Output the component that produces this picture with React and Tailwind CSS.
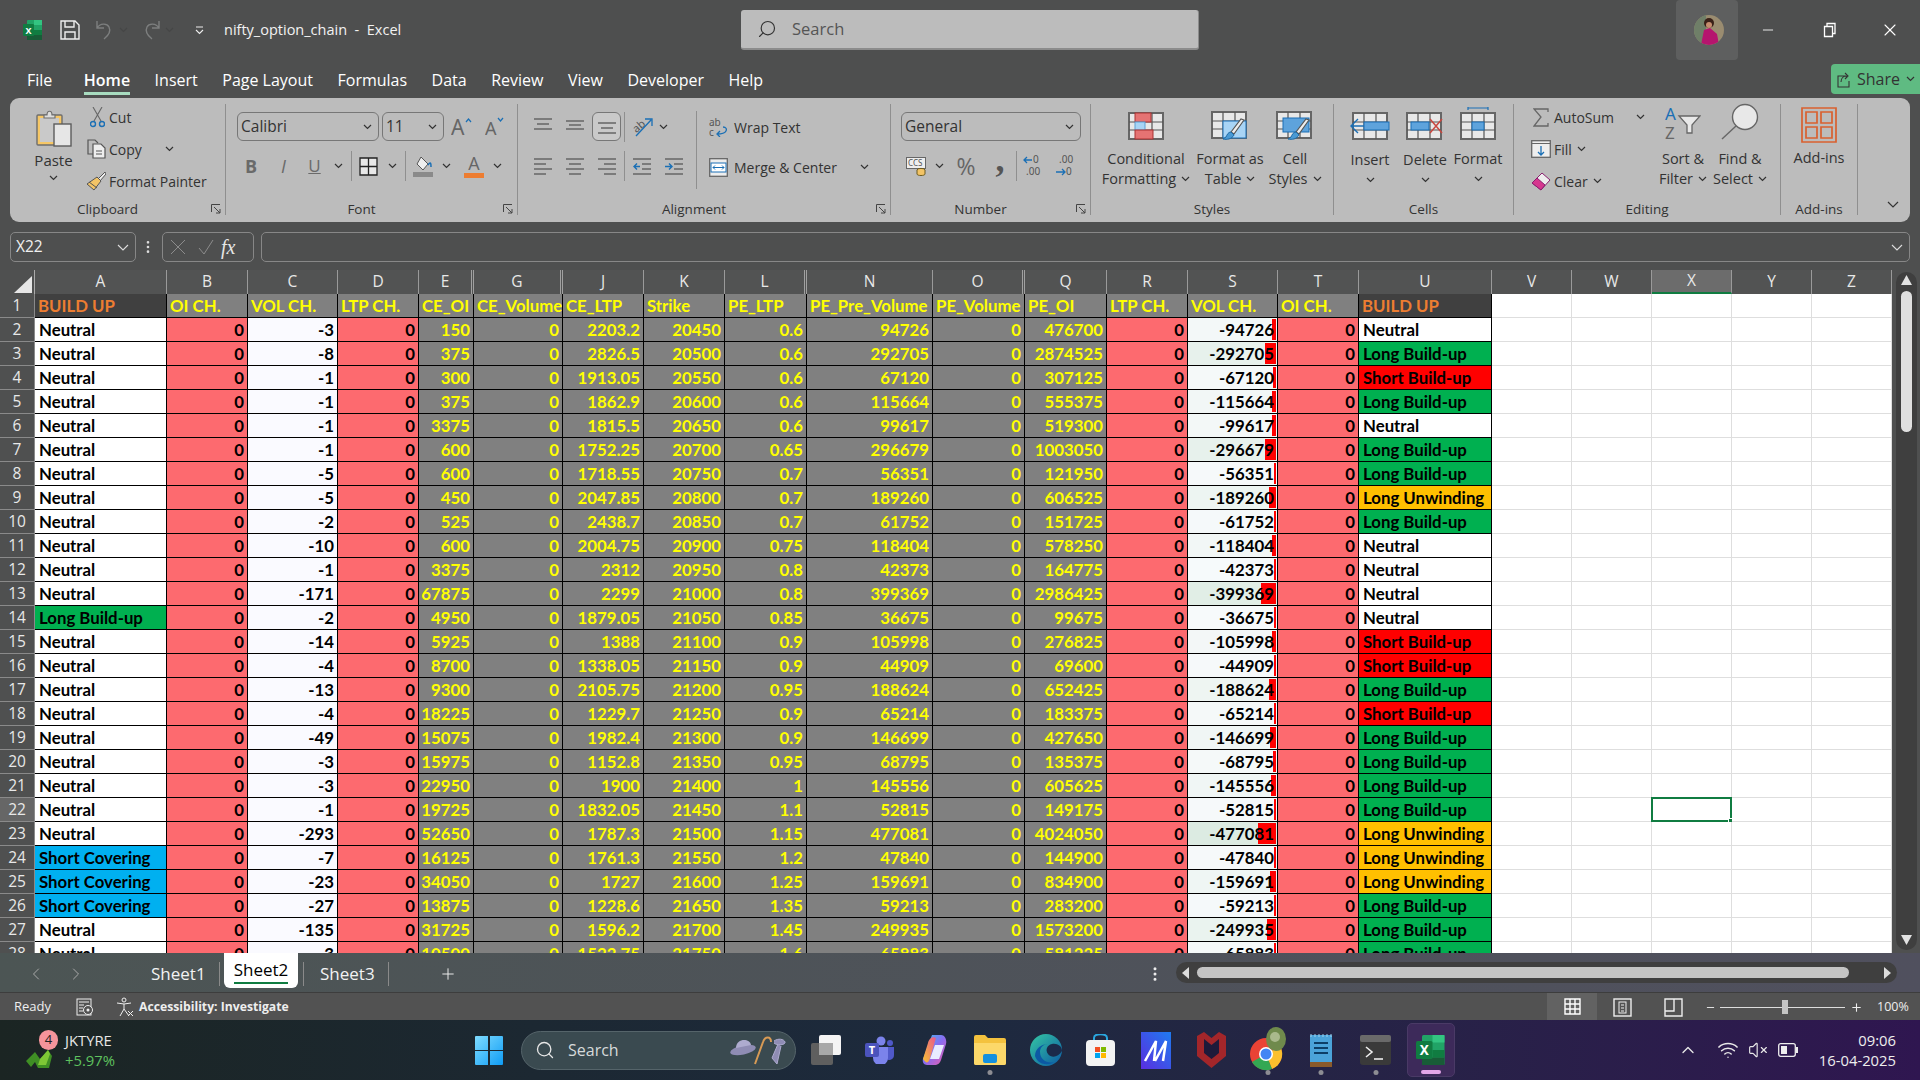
import { Search, ChevronUp, Wifi, VolumeX, Plus, ChevronLeft, ChevronRight, EllipsisVertical, X, Minus } from "lucide-react";

const rows = [
  ["Neutral", -3, 150, 2203.2, 20450, 0.6, 94726, 476700, "Neutral"],
  ["Neutral", -8, 375, 2826.5, 20500, 0.6, 292705, 2874525, "Long Build-up"],
  ["Neutral", -1, 300, 1913.05, 20550, 0.6, 67120, 307125, "Short Build-up"],
  ["Neutral", -1, 375, 1862.9, 20600, 0.6, 115664, 555375, "Long Build-up"],
  ["Neutral", -1, 3375, 1815.5, 20650, 0.6, 99617, 519300, "Neutral"],
  ["Neutral", -1, 600, 1752.25, 20700, 0.65, 296679, 1003050, "Long Build-up"],
  ["Neutral", -5, 600, 1718.55, 20750, 0.7, 56351, 121950, "Long Build-up"],
  ["Neutral", -5, 450, 2047.85, 20800, 0.7, 189260, 606525, "Long Unwinding"],
  ["Neutral", -2, 525, 2438.7, 20850, 0.7, 61752, 151725, "Long Build-up"],
  ["Neutral", -10, 600, 2004.75, 20900, 0.75, 118404, 578250, "Neutral"],
  ["Neutral", -1, 3375, 2312, 20950, 0.8, 42373, 164775, "Neutral"],
  ["Neutral", -171, 67875, 2299, 21000, 0.8, 399369, 2986425, "Neutral"],
  ["Long Build-up", -2, 4950, 1879.05, 21050, 0.85, 36675, 99675, "Neutral"],
  ["Neutral", -14, 5925, 1388, 21100, 0.9, 105998, 276825, "Short Build-up"],
  ["Neutral", -4, 8700, 1338.05, 21150, 0.9, 44909, 69600, "Short Build-up"],
  ["Neutral", -13, 9300, 2105.75, 21200, 0.95, 188624, 652425, "Long Build-up"],
  ["Neutral", -4, 18225, 1229.7, 21250, 0.9, 65214, 183375, "Short Build-up"],
  ["Neutral", -49, 15075, 1982.4, 21300, 0.9, 146699, 427650, "Long Build-up"],
  ["Neutral", -3, 15975, 1152.8, 21350, 0.95, 68795, 135375, "Long Build-up"],
  ["Neutral", -3, 22950, 1900, 21400, 1, 145556, 605625, "Long Build-up"],
  ["Neutral", -1, 19725, 1832.05, 21450, 1.1, 52815, 149175, "Long Build-up"],
  ["Neutral", -293, 52650, 1787.3, 21500, 1.15, 477081, 4024050, "Long Unwinding"],
  ["Short Covering", -7, 16125, 1761.3, 21550, 1.2, 47840, 144900, "Long Unwinding"],
  ["Short Covering", -23, 34050, 1727, 21600, 1.25, 159691, 834900, "Long Unwinding"],
  ["Short Covering", -27, 13875, 1228.6, 21650, 1.35, 59213, 283200, "Long Build-up"],
  ["Neutral", -135, 31725, 1596.2, 21700, 1.45, 249935, 1573200, "Long Build-up"],
  ["Neutral", -3, 10500, 1522.75, 21750, 1.6, 65883, 581225, "Long Build-up"],
];

const letters = ["A", "B", "C", "D", "E", "G", "J", "K", "L", "N", "O", "Q", "R", "S", "T", "U", "V", "W", "X", "Y", "Z"];
const hidden = ["E", "G", "L", "O"];
const headers = ["BUILD UP", "OI CH.", "VOL CH.", "LTP CH.", "CE_OI", "CE_Volume", "CE_LTP", "Strike", "PE_LTP", "PE_Pre_Volume", "PE_Volume", "PE_OI", "LTP CH.", "VOL CH.", "OI CH.", "BUILD UP"];

const statusBg = {
  Neutral: "bg-white",
  "Long Build-up": "bg-[#00b050]",
  "Short Build-up": "bg-[#ff0000]",
  "Long Unwinding": "bg-[#ffc000]",
  "Short Covering": "bg-[#00b0f0]",
};

const gridCols = "grid grid-cols-[35px_132px_81px_90px_81px_55px_89px_81px_81px_82px_126px_92px_82px_81px_90px_81px_133px_80px_80px_80px_80px_80px]";

function Chev({ className = "" }) {
  return (
    <svg width="9" height="6" viewBox="0 0 9 6" className={className}>
      <path d="M1 1l3.5 3.5L8 1" fill="none" stroke="#333" strokeWidth="1.2" />
    </svg>
  );
}

function Launcher() {
  return (
    <svg width="10" height="10" viewBox="0 0 10 10" className="justify-self-end mr-[4px]">
      <path d="M.5 8V.5H9M3 3l6 6M5 9h4V5" fill="none" stroke="#444" strokeWidth="1" />
    </svg>
  );
}

function Group({ className, label, launcher, children }) {
  return (
    <div className={`flex pt-[3px] shrink-0 ${className}`}>
      <div className="flex-1 min-w-0 flex flex-col h-[118px]">
        <div className="h-[98px] flex">{children}</div>
        {launcher ? (
          <div className="h-[20px] grid grid-cols-[1fr_auto_1fr_20px] items-center text-[13.5px] text-[#333]">
            <span />
            <span>{label}</span>
            <span />
            <Launcher />
          </div>
        ) : (
          <div className="h-[20px] flex justify-center items-center text-[13.5px] text-[#333]">{label}</div>
        )}
      </div>
      <div className="w-px h-[111px] mt-[3px] bg-[#8f8f8f]" />
    </div>
  );
}

function Slot({ className, children }) {
  return <div className={`flex items-center justify-center shrink-0 ${className}`}>{children}</div>;
}

function Combo({ className, children }) {
  return (
    <div className={`h-[29px] rounded-[6px] border border-[#777] flex items-center justify-between pl-[3px] pr-[6px] text-[15.5px] text-[#333] shrink-0 ${className}`}>
      <span>{children}</span>
      <Chev />
    </div>
  );
}

function SmallBtn({ icon, text, textClass, chevClass }) {
  return (
    <div className="h-[32px] flex items-center text-[14px] text-[#333]">
      <Slot className="w-[26px]">{icon}</Slot>
      <span className={`whitespace-nowrap ${textClass}`}>{text}</span>
      {chevClass !== undefined && <Chev className={chevClass} />}
    </div>
  );
}

function BigBtn({ className, icon, line1, line2, iconClass = "h-[39px] items-end" }) {
  return (
    <div className={`flex flex-col items-center shrink-0 text-[14.5px] leading-[20px] text-[#333] ${className}`}>
      <div className={`flex justify-center ${iconClass}`}>{icon}</div>
      <div className="mt-[9px] whitespace-nowrap">{line1}</div>
      {line2 ? (
        <div className="whitespace-nowrap flex items-center gap-[5px]">
          {line2}
          <Chev />
        </div>
      ) : (
        <Chev className="mt-[7px]" />
      )}
    </div>
  );
}

function SheetGrid({ fill = "#e8e8e8" }) {
  return (
    <>
      <rect x="1" y="1" width="34" height="26" fill={fill} stroke="#666" strokeWidth="2" />
      <path d="M12 1v26M24 1v26M1 10h34M1 18h34" stroke="#555" strokeWidth="1.2" />
    </>
  );
}

function Brush() {
  return (
    <g>
      <path d="M33 9L23 23l-3-2L30 8z" fill="#eee" stroke="#555" strokeWidth="1.2" />
      <path d="M20 21c-3 0-4 3-5 5l-3 2c4 1 9 0 11-4z" fill="#4a9ad4" stroke="#1f6aa5" strokeWidth="1" />
    </g>
  );
}

function ExcelIcon({ size = 20 }) {
  return (
    <svg width={size} height={size} viewBox="0 0 20 20">
      <rect x="4" y="0" width="15" height="20" rx="1" fill="#21a366" />
      <rect x="11" y="0" width="8" height="5" fill="#33c481" />
      <rect x="11" y="10" width="8" height="5" fill="#107c41" />
      <rect x="4" y="15" width="15" height="5" fill="#185c37" />
      <rect x="0" y="4" width="11" height="12" rx="1" fill="#107c41" />
      <text x="5.5" y="13.5" textAnchor="middle" fontSize="9" fontWeight="700" fill="#fff" fontFamily="Noto Sans, sans-serif">X</text>
    </svg>
  );
}

function TitleBar() {
  return (
    <div className="h-[60px] flex items-center shrink-0 relative">
      <div className="ml-[23px]"><ExcelIcon /></div>
      <svg width="20" height="20" viewBox="0 0 20 20" className="ml-[17px]">
        <path d="M1 1h14l4 4v14H1zM5 1v6h9V1M5 19v-7h10v7" fill="none" stroke="#eee" strokeWidth="1.4" />
      </svg>
      <svg width="18" height="20" viewBox="0 0 18 20" className="ml-[16px]">
        <path d="M1 1v7h7M1 8c3-5 10-5 12-1 2 4 0 8-5 12" fill="none" stroke="#7d7f7f" strokeWidth="1.4" />
      </svg>
      <Chev className="ml-[5px] opacity-30" />
      <svg width="18" height="20" viewBox="0 0 18 20" className="ml-[14px]">
        <path d="M17 1v7h-7M17 8c-3-5-10-5-12-1-2 4 0 8 5 12" fill="none" stroke="#7d7f7f" strokeWidth="1.4" />
      </svg>
      <Chev className="ml-[5px] opacity-30" />
      <svg width="9" height="9" viewBox="0 0 9 9" className="ml-[21px]">
        <path d="M1 1h7M1 4l3.5 3.5L8 4" fill="none" stroke="#eee" strokeWidth="1.1" />
      </svg>
      <span className="ml-[20px] text-[14.5px] text-[#f2f2f2] whitespace-pre">nifty_option_chain  -  Excel</span>
      <div className="absolute left-[741px] top-[10px] w-[458px] h-[40px] rounded-[3px] bg-[#bcbcbc] border-b-2 border-r border-[#8c8c8c] flex items-center">
        <Search size={20} strokeWidth={1.4} className="ml-[16px] -scale-x-100 text-[#333]" />
        <span className="ml-[15px] text-[16.5px] text-[#555]">Search</span>
      </div>
      <div className="ml-auto w-[62px] h-[60px] bg-[#5e5f5f] rounded-[4px] flex items-center justify-center pl-[4px]">
        <svg width="30" height="30" viewBox="0 0 30 30">
          <clipPath id="av"><ellipse cx="15" cy="15" rx="15" ry="15" /></clipPath>
          <g clipPath="url(#av)">
            <rect width="30" height="30" fill="#9a8c70" />
            <rect x="0" y="0" width="12" height="30" fill="#6f7f68" />
            <circle cx="15" cy="8" r="5" fill="#3a2018" />
            <circle cx="15" cy="10" r="3" fill="#c48d6e" />
            <path d="M7 30l3-15 6-2 7 6 2 11z" fill="#b5156e" />
          </g>
        </svg>
      </div>
      <Minus size={16} strokeWidth={1.3} className="ml-[22px] text-white" />
      <svg width="14" height="16" viewBox="0 0 14 16" className="ml-[47px]">
        <path d="M1.5 4.500h8v10h-8zM4 4.500V1.500h8v10H9.500" fill="none" stroke="#fff" strokeWidth="1.3" />
      </svg>
      <X size={20} strokeWidth={1.3} className="ml-[43px] mr-[20px] text-white" />
    </div>
  );
}

function MenuBar() {
  const items = ["File", "Home", "Insert", "Page Layout", "Formulas", "Data", "Review", "View", "Developer", "Help"];
  return (
    <div className="h-[38px] shrink-0 flex items-start pl-[27px] gap-[24.5px] text-[16px] text-white relative">
      {items.map((m) => (
        <div key={m} className={`relative h-[35px] pt-[8px] leading-[24px] whitespace-nowrap ${m === "Home" ? "font-semibold" : ""} ${m === "File" ? "mr-[7px]" : ""}`}>
          {m}
          {m === "Home" && <div className="absolute left-0 right-0 bottom-0 h-[3px] bg-[#a8dcc0]" />}
        </div>
      ))}
      <div className="ml-auto mt-[4px] w-[89px] h-[30px] rounded-l-[4px] bg-[#5fbb82] flex items-center pl-[6px] gap-[6px] text-[#333]">
        <svg width="14" height="17" viewBox="0 0 14 17">
          <path d="M9 5H1v11h11v-6M4 11c0-4 3-6 6-6M8 2l3 3-3 3" fill="none" stroke="#333" strokeWidth="1.1" />
        </svg>
        <span className="text-[16px]">Share</span>
        <Chev />
      </div>
    </div>
  );
}

function LinesIcon({ type }) {
  const d = {
    top: "M0 2h18M3 7h12M0 12h18",
    mid: "M0 4h18M3 8h12M0 12h18",
    bot: "M0 6h18M3 11h12M0 16h18",
    left: "M0 2h18M0 7h12M0 12h18M0 17h12",
    center: "M0 2h18M3 7h12M0 12h18M3 17h12",
    right: "M0 2h18M6 7h12M0 12h18M6 17h12",
  }[type];
  return (
    <svg width="18" height="19" viewBox="0 0 18 19">
      <path d={d} stroke="#666" strokeWidth="1.5" />
    </svg>
  );
}

function IndentIcon({ dir }) {
  return (
    <svg width="18" height="19" viewBox="0 0 18 19">
      {dir === "out" ? (
        <>
          <path d="M0 2h18M9 7h9M9 12h9M0 17h18" stroke="#666" strokeWidth="1.5" />
          <path d="M7 9.500H1M4 6.500l-3 3 3 3" fill="none" stroke="#1a6fb5" strokeWidth="1.4" />
        </>
      ) : (
        <>
          <path d="M0 2h18M9 7h9M9 12h9M0 17h18" stroke="#666" strokeWidth="1.5" />
          <path d="M0 9.500h6M4 6.500l3 3-3 3" fill="none" stroke="#1a6fb5" strokeWidth="1.4" />
        </>
      )}
    </svg>
  );
}

function DecimalIcon({ dir }) {
  return (
    <svg width="20" height="24" viewBox="0 0 20 24" fontFamily="Noto Sans, sans-serif" fontSize="10" fill="#555">
      {dir === "inc" ? (
        <>
          <text x="10" y="9">0</text>
          <text x="3" y="21">.00</text>
          <path d="M9 6H1M4 3L1 6l3 3" fill="none" stroke="#1a6fb5" strokeWidth="1.3" />
        </>
      ) : (
        <>
          <text x="4" y="9">.00</text>
          <text x="11" y="21">0</text>
          <path d="M1 18h9M7 15l3 3-3 3" fill="none" stroke="#1a6fb5" strokeWidth="1.3" />
        </>
      )}
    </svg>
  );
}

function Ribbon() {
  const sep = <div className="w-px h-[30px] bg-[#8f8f8f] mx-auto" />;
  return (
    <div className="mx-[10px] h-[124px] shrink-0 rounded-[9px] bg-[#bcbcbc] flex items-start">
      <Group className="w-[216px]" label="Clipboard" launcher>
        <div className="pl-[14px] flex">
          <div className="w-[59px] flex flex-col items-center text-[15px] text-[#333] pt-[8px]">
            <svg width="36" height="38" viewBox="0 0 36 38">
              <rect x="1" y="6" width="25" height="30" rx="1" fill="#f6c766" stroke="#6e6e6e" strokeWidth="1.4" />
              <rect x="4" y="9" width="19" height="24" fill="#c9c9c9" />
              <path d="M8 9V6h3c0-5 5-5 5 0h3v3z" fill="#ddd" stroke="#6e6e6e" strokeWidth="1.2" />
              <rect x="18" y="15" width="17" height="22" fill="#e6e6e6" stroke="#5c5c5c" strokeWidth="1.4" />
            </svg>
            <span className="mt-[3px] leading-[20px]">Paste</span>
            <Chev className="mt-[5px]" />
          </div>
          <div className="flex flex-col">
            <SmallBtn
              text="Cut"
              icon={
                <svg width="15" height="21" viewBox="0 0 15 21" className="ml-[2px]">
                  <path d="M3 0l8 14M12 0L4 14" stroke="#666" strokeWidth="1.1" />
                  <circle cx="3" cy="17" r="2.500" fill="none" stroke="#1a6fb5" strokeWidth="1.4" />
                  <circle cx="12" cy="17" r="2.500" fill="none" stroke="#1a6fb5" strokeWidth="1.4" />
                </svg>
              }
            />
            <SmallBtn
              text="Copy"
              textClass="w-[54px]"
              chevClass="ml-[2px]"
              icon={
                <svg width="19" height="20" viewBox="0 0 19 20">
                  <path d="M8 15H1V1h7l3 3" fill="none" stroke="#555" strokeWidth="1.2" />
                  <path d="M6 5h8l4 4v10H6z" fill="#eee" stroke="#555" strokeWidth="1.2" />
                  <path d="M9 12h6M9 15h6" stroke="#555" />
                </svg>
              }
            />
            <SmallBtn
              text="Format Painter"
              icon={
                <svg width="20" height="20" viewBox="0 0 20 20">
                  <path d="M19 1l-7 7 2 2 6-7z" fill="#eee" stroke="#555" />
                  <path d="M11 6l4 4-7 9-7-6z" fill="#f3c466" stroke="#555" />
                  <path d="M3 11l8 6" stroke="#555" />
                </svg>
              }
            />
          </div>
        </div>
      </Group>

      <Group className="w-[292px]" label="Font" launcher>
        <div className="flex flex-col pt-[11px]">
          <div className="flex items-center pl-[11px]">
            <Combo className="w-[142px]">Calibri</Combo>
            <Combo className="w-[62px] ml-[3px]">11</Combo>
            <svg width="22" height="20" viewBox="0 0 22 20" className="ml-[7px]" fontFamily="Noto Sans, sans-serif">
              <text x="0" y="18" fontSize="21" fill="#666">A</text>
              <path d="M15 5l2.500-3L20 5" fill="none" stroke="#1a6fb5" strokeWidth="1.2" />
            </svg>
            <svg width="20" height="20" viewBox="0 0 20 20" className="ml-[12px]" fontFamily="Noto Sans, sans-serif">
              <text x="0" y="18" fontSize="18" fill="#666">A</text>
              <path d="M13 1l2.500 3L18 1" fill="none" stroke="#1a6fb5" strokeWidth="1.2" />
            </svg>
          </div>
          <div className="h-[30px] mt-[10px] flex items-center pl-[11px]">
            <Slot className="w-[28px] text-[18px] font-bold text-[#6a6a6a]">B</Slot>
            <Slot className="w-[37px] text-[18px] italic text-[#6a6a6a]">I</Slot>
            <Slot className="w-[25px] text-[17px] underline text-[#6a6a6a]">U</Slot>
            <Slot className="w-[22px]"><Chev /></Slot>
            <Slot className="w-[4px]">{sep}</Slot>
            <Slot className="w-[31px]">
              <svg width="19" height="19" viewBox="0 0 19 19">
                <path d="M1 1h17v17H1zM9.500 1v17M1 9.500h17" fill="#e8e8e8" stroke="#222" strokeWidth="1.3" />
              </svg>
            </Slot>
            <Slot className="w-[16px]"><Chev /></Slot>
            <Slot className="w-[10px]">{sep}</Slot>
            <Slot className="w-[26px]">
              <svg width="20" height="21" viewBox="0 0 20 21">
                <path d="M8 1l7 7-5 6-6-6z" fill="#eee" stroke="#555" />
                <path d="M15 9c3-4 3-1 3 2" fill="none" stroke="#1a6fb5" strokeWidth="1.5" />
                <rect x="0" y="16" width="20" height="5" fill="#8a8a8a" />
              </svg>
            </Slot>
            <Slot className="w-[20px]"><Chev /></Slot>
            <Slot className="w-[36px] flex-col">
              <span className="text-[18px] leading-[17px] text-[#666]">A</span>
              <div className="w-[20px] h-[5px] bg-[#ed7d31] mt-[1px]" />
            </Slot>
            <Slot className="w-[10px]"><Chev /></Slot>
          </div>
        </div>
      </Group>

      <Group className="w-[373px]" label="Alignment" launcher>
        <div className="flex">
          <div className="w-[173px] pl-[11px] pt-[11px] flex flex-col">
            <div className="flex items-center h-[29px]">
              <Slot className="w-[28px]"><LinesIcon type="top" /></Slot>
              <Slot className="w-[35px]"><LinesIcon type="mid" /></Slot>
              <Slot className="w-[29px] h-[29px] rounded-[6px] border border-[#777] bg-[#c9c9c9]"><LinesIcon type="bot" /></Slot>
              <Slot className="w-[6px]">{sep}</Slot>
              <Slot className="w-[30px]">
                <svg width="21" height="20" viewBox="0 0 21 20">
                  <text x="1" y="13" fontSize="11" fill="#555" transform="rotate(-40 7 10)" fontFamily="Noto Sans, sans-serif">ab</text>
                  <path d="M4 19L19 3M13 2h7v7" fill="none" stroke="#1a6fb5" strokeWidth="1.3" />
                </svg>
              </Slot>
              <Slot className="w-[12px]"><Chev /></Slot>
            </div>
            <div className="flex items-center h-[30px] mt-[10px]">
              <Slot className="w-[28px]"><LinesIcon type="left" /></Slot>
              <Slot className="w-[35px]"><LinesIcon type="center" /></Slot>
              <Slot className="w-[29px]"><LinesIcon type="right" /></Slot>
              <Slot className="w-[6px]">{sep}</Slot>
              <Slot className="w-[30px]"><IndentIcon dir="out" /></Slot>
              <Slot className="w-[34px]"><IndentIcon dir="in" /></Slot>
            </div>
          </div>
          <div className="w-[11px] flex justify-center pt-[10px]">
            <div className="w-px h-[78px] bg-[#8f8f8f]" />
          </div>
          <div className="pt-[10px] flex flex-col text-[14px] text-[#333]">
            <div className="h-[32px] flex items-center">
              <Slot className="w-[32px]">
                <svg width="19" height="20" viewBox="0 0 19 20" fontFamily="Noto Sans, sans-serif" fontSize="10" fill="#555">
                  <text x="0" y="9">ab</text>
                  <text x="0" y="19">c</text>
                  <path d="M14 10c3 0 4 2 3 4s-3 3-9 3M11 14l-3 3 3 3" fill="none" stroke="#1a6fb5" strokeWidth="1.3" />
                </svg>
              </Slot>
              <span>Wrap Text</span>
            </div>
            <div className="h-[32px] mt-[8px] flex items-center">
              <Slot className="w-[32px]">
                <svg width="19" height="19" viewBox="0 0 19 19">
                  <rect x=".7" y=".7" width="17.600" height="17.600" fill="#eee" stroke="#666" strokeWidth="1.3" />
                  <rect x="2" y="5" width="15" height="9" fill="#fff" stroke="#1a6fb5" />
                  <path d="M4 9.500h11M6 7.500l-2 2 2 2M13 7.500l2 2-2 2" fill="none" stroke="#1a6fb5" />
                </svg>
              </Slot>
              <span className="w-[126px] whitespace-nowrap">Merge &amp; Center</span>
              <Chev />
            </div>
          </div>
        </div>
      </Group>

      <Group className="w-[200px]" label="Number" launcher>
        <div className="flex flex-col pt-[11px] pl-[10px]">
          <Combo className="w-[180px]">General</Combo>
          <div className="h-[30px] mt-[10px] flex items-center">
            <Slot className="w-[30px]">
              <svg width="20" height="20" viewBox="0 0 20 20">
                <rect x=".5" y="1.500" width="19" height="11" fill="#eee" stroke="#666" />
                <text x="2" y="10" fontSize="8" fill="#555" fontFamily="Noto Sans, sans-serif">CCS</text>
                <ellipse cx="15" cy="14" rx="4" ry="1.600" fill="#f3c466" stroke="#6b5a20" />
                <path d="M11 14v4c0 2 8 2 8 0v-4" fill="#f3c466" stroke="#6b5a20" />
              </svg>
            </Slot>
            <Slot className="w-[16px]"><Chev /></Slot>
            <Slot className="w-[38px] text-[23px] text-[#666]">%</Slot>
            <Slot className="w-[30px] text-[36px] font-bold leading-[30px] text-[#555] [font-family:'Liberation_Serif',serif] pb-[14px]">,</Slot>
            <Slot className="w-[2px]">{sep}</Slot>
            <Slot className="w-[32px]"><DecimalIcon dir="inc" /></Slot>
            <Slot className="w-[32px]"><DecimalIcon dir="dec" /></Slot>
          </div>
        </div>
      </Group>

      <Group className="w-[243px]" label="Styles">
        <div className="pl-[3px] flex">
          <BigBtn
            className="w-[104px]"
            line1="Conditional"
            line2="Formatting"
            icon={
              <svg width="36" height="28" viewBox="0 0 36 28">
                <SheetGrid />
                <rect x="7" y="1" width="16" height="9" fill="#e57373" stroke="#a33" />
                <rect x="7" y="10" width="10" height="8" fill="#a8d4f5" stroke="#5a9fd4" />
                <rect x="7" y="18" width="18" height="9" fill="#e57373" stroke="#a33" />
              </svg>
            }
          />
          <BigBtn
            className="w-[64px]"
            line1="Format as"
            line2="Table"
            icon={
              <svg width="38" height="29" viewBox="0 0 38 29">
                <SheetGrid />
                <rect x="12" y="10" width="23" height="17" fill="#a8d4f5" stroke="#1a6fb5" />
                <Brush />
              </svg>
            }
          />
          <BigBtn
            className="w-[66px]"
            line1="Cell"
            line2="Styles"
            icon={
              <svg width="38" height="29" viewBox="0 0 38 29">
                <SheetGrid />
                <rect x="7" y="7" width="26" height="14" fill="#5ea3dc" stroke="#1a6fb5" />
                <Brush />
              </svg>
            }
          />
        </div>
      </Group>

      <Group className="w-[180px]" label="Cells">
        <div className="pl-[7px] flex">
          <BigBtn
            className="w-[58px]"
            line1={<span className="inline-block mt-[1px]">Insert</span>}
            icon={
              <svg width="40" height="28" viewBox="0 0 40 28">
                <g transform="translate(2 0)"><SheetGrid /></g>
                <rect x="14" y="10" width="25" height="8" fill="#5ea3dc" stroke="#1a6fb5" />
                <path d="M14 14H1M8 7l-7 7 7 7" fill="none" stroke="#1a6fb5" strokeWidth="1.4" />
              </svg>
            }
          />
          <BigBtn
            className="w-[52px]"
            line1={<span className="inline-block mt-[1px]">Delete</span>}
            icon={
              <svg width="38" height="28" viewBox="0 0 38 28">
                <SheetGrid />
                <rect x="5" y="10" width="18" height="8" fill="#5ea3dc" stroke="#1a6fb5" />
                <path d="M24 7l12 14M36 7L24 21" stroke="#c9473f" strokeWidth="1.5" />
              </svg>
            }
          />
          <BigBtn
            className="w-[54px]"
            line1="Format"
            icon={
              <svg width="36" height="33" viewBox="0 0 36 33">
                <path d="M8 1h20M8 0v3M28 0v3" stroke="#1a6fb5" strokeWidth="1.2" />
                <g transform="translate(0 5)">
                  <SheetGrid />
                  <rect x="12" y="10" width="12" height="8" fill="#5ea3dc" stroke="#1a6fb5" />
                </g>
              </svg>
            }
          />
        </div>
      </Group>

      <Group className="w-[267px]" label="Editing">
        <div className="flex">
          <div className="w-[140px] pl-[14px] flex flex-col">
            <SmallBtn
              text="AutoSum"
              textClass="w-[82px]"
              chevClass=""
              icon={
                <svg width="16" height="19" viewBox="0 0 16 19">
                  <path d="M15 4V1H1l7 8-7 9h14v-3" fill="none" stroke="#666" strokeWidth="1.3" />
                </svg>
              }
            />
            <SmallBtn
              text="Fill"
              chevClass="ml-[5px]"
              icon={
                <svg width="20" height="18" viewBox="0 0 20 18">
                  <rect x=".7" y=".7" width="18.600" height="16.600" fill="#eee" stroke="#666" strokeWidth="1.3" />
                  <path d="M.7 3.500h18.600" stroke="#666" />
                  <path d="M10 6v9M7 12l3 3 3-3" fill="none" stroke="#1a6fb5" strokeWidth="1.3" />
                </svg>
              }
            />
            <SmallBtn
              text="Clear"
              chevClass="ml-[5px]"
              icon={
                <svg width="20" height="19" viewBox="0 0 20 19">
                  <path d="M11 1l8 7-9 10-9-7z" fill="#eee" stroke="#8a1f6f" />
                  <path d="M6 6l8 7-4 5-9-7z" fill="#d6378f" stroke="#8a1f6f" />
                </svg>
              }
            />
          </div>
          <BigBtn
            className="w-[58px]"
            line1="Sort &"
            line2="Filter"
            icon={
              <svg width="36" height="34" viewBox="0 0 36 34" fontFamily="Noto Sans, sans-serif">
                <text x="0" y="14" fontSize="17" fill="#1a6fb5">A</text>
                <text x="0" y="33" fontSize="17" fill="#666">Z</text>
                <path d="M14 10h21l-8 9v8h-5v-8z" fill="#e8e8e8" stroke="#666" strokeWidth="1.3" />
              </svg>
            }
          />
          <BigBtn
            className="w-[56px]"
            line1="Find &"
            line2="Select"
            icon={
              <svg width="38" height="37" viewBox="0 0 38 37">
                <circle cx="24" cy="14" r="12.500" fill="#e8e8e8" stroke="#666" strokeWidth="1.4" />
                <path d="M15 23L1 36" stroke="#666" strokeWidth="1.4" />
              </svg>
            }
          />
        </div>
      </Group>

      <Group className="w-[77px]" label="Add-ins">
        <div className="w-full flex flex-col items-center pt-[6px] text-[14.5px] text-[#333]">
          <svg width="36" height="36" viewBox="0 0 36 36">
            <path d="M1 1h34v34H1zM5 5h11v11H5zM20 5h11v11H20zM5 20h11v11H5zM20 20h11v11H20z" fill="none" stroke="#d9602f" strokeWidth="1.7" />
          </svg>
          <span className="mt-[5px] leading-[20px]">Add-ins</span>
        </div>
      </Group>

      <div className="flex-1 h-full flex items-end pb-[14px] pl-[29px]">
        <svg width="12" height="7" viewBox="0 0 12 7">
          <path d="M1 1l5 5 5-5" fill="none" stroke="#333" strokeWidth="1.2" />
        </svg>
      </div>
    </div>
  );
}

function FormulaBar() {
  return (
    <div className="h-[30px] mt-[10px] mx-[10px] shrink-0 flex items-center text-[#f0f0f0]">
      <div className="w-[126px] h-full rounded-[5px] border border-[#878787] flex items-center justify-between pl-[5px] pr-[6px] text-[15.5px]">
        X22
        <svg width="12" height="7" viewBox="0 0 12 7"><path d="M1 1l5 5 5-5" fill="none" stroke="#ddd" strokeWidth="1.1" /></svg>
      </div>
      <EllipsisVertical size={16} className="ml-[4px] text-[#ddd]" />
      <div className="w-[92px] h-full ml-[6px] rounded-[5px] border border-[#878787] flex items-center gap-[12px] pl-[7px] text-[#8c8c8c]">
        <svg width="16" height="16" viewBox="0 0 16 16"><path d="M1 1l14 14M15 1L1 15" stroke="#8c8c8c" /></svg>
        <svg width="16" height="16" viewBox="0 0 16 16"><path d="M1 9l5 6L15 1" fill="none" stroke="#8c8c8c" /></svg>
        <span className="-ml-[5px] text-[20px] italic text-[#e6e6e6] [font-family:'Liberation_Serif',serif]">fx</span>
      </div>
      <div className="flex-1 h-full ml-[7px] rounded-[5px] border border-[#878787] flex items-center justify-end pr-[6px]">
        <svg width="12" height="7" viewBox="0 0 12 7"><path d="M1 1l5 5 5-5" fill="none" stroke="#ddd" strokeWidth="1.1" /></svg>
      </div>
    </div>
  );
}

function Cell({ className, children, style }) {
  return (
    <div
      style={style}
      className={`relative h-[24px] pt-[1px] border-r border-b border-black flex items-center whitespace-nowrap overflow-hidden text-[16.8px] font-bold leading-[22px] [font-family:Lato,sans-serif] ${className}`}
    >
      {children}
    </div>
  );
}

function lerpTint(v) {
  const t = Math.min(1, v / 477081);
  const c = (a, b) => Math.round(a + (b - a) * t);
  return `rgb(${c(249, 220)},${c(251, 235)},${c(253, 226)})`;
}

function RowHead({ n }) {
  return (
    <div className={`h-[24px] border-b border-r border-[#8a8a8a] flex items-center justify-center text-[15.5px] text-[#e8e8e8] ${n === 22 ? "bg-[#666]" : "bg-[#4f5050]"}`}>
      {n}
    </div>
  );
}

function Empty({ n, letter }) {
  return (
    <div className="relative h-[24px] bg-white border-r border-b border-[#dedede]">
      {n === 22 && letter === "X" && (
        <div className="absolute -left-px -top-px right-[-1px] bottom-[-1px] border-2 border-[#107c41]">
          <div className="absolute -right-[3px] -bottom-[3px] w-[5px] h-[5px] bg-[#107c41] border border-white" />
        </div>
      )}
    </div>
  );
}

const emptyLetters = ["V", "W", "X", "Y", "Z"];

function DataRow({ n, r }) {
  const [a, c, e, j, k, l, pv, q, u] = r;
  const num = "justify-end pr-[3px]";
  const red = `bg-[#fd6a6f] text-black ${num}`;
  const gray = `bg-[#808080] text-[#ffff00] ${num}`;
  return (
    <>
      <RowHead n={n} />
      <Cell className={`${statusBg[a]} text-black pl-[4px]`}>{a}</Cell>
      <Cell className={red}>0</Cell>
      <Cell className={`bg-[#fafaff] text-black ${num}`}>{c}</Cell>
      <Cell className={red}>0</Cell>
      <Cell className={gray}>{e}</Cell>
      <Cell className={gray}>0</Cell>
      <Cell className={gray}>{j}</Cell>
      <Cell className={gray}>{k}</Cell>
      <Cell className={gray}>{l}</Cell>
      <Cell className={gray}>{pv}</Cell>
      <Cell className={gray}>0</Cell>
      <Cell className={gray}>{q}</Cell>
      <Cell className={red}>0</Cell>
      <Cell className={`text-black ${num}`} style={{ backgroundColor: lerpTint(pv) }}>
        <div className="absolute right-[1px] top-[1px] bottom-[1px] bg-[#ff0000]" style={{ width: Math.max(2, (18 * pv) / 477081) }} />
        <span className="relative">{-pv}</span>
      </Cell>
      <Cell className={red}>0</Cell>
      <Cell className={`${statusBg[u]} text-black pl-[4px]`}>{u}</Cell>
      {emptyLetters.map((x) => <Empty key={x} n={n} letter={x} />)}
    </>
  );
}

function Sheet() {
  return (
    <div className="h-[683px] mt-[8px] shrink-0 flex overflow-hidden">
      <div className="w-[1892px] overflow-hidden">
        <div className={gridCols}>
          <div className="h-[24px] bg-[#4f5050] border-r border-[#aaa] flex items-end justify-end pb-[1px] pr-[2px]">
            <svg width="18" height="17" viewBox="0 0 18 17"><path d="M18 0v17H0z" fill="#e6e6e6" /></svg>
          </div>
          {letters.map((c) => (
            <div
              key={c}
              className={`h-[24px] flex items-center justify-center text-[15.5px] text-[#e8e8e8] ${hidden.includes(c) ? "border-r-[3px] border-double border-[#a0a0a0]" : "border-r border-[#9a9a9a]"} ${c === "X" ? "bg-[#6c6c6c] border-b-2 border-b-[#107c41]" : "bg-[#525353]"}`}
            >
              {c}
            </div>
          ))}
          <RowHead n={1} />
          {headers.map((h, i) => (
            <Cell
              key={i}
              className={`pl-[3px] ${i === 0 || i === 15 ? "bg-[#404040] text-[#ed7d31]" : "bg-[#808080] text-[#ffff00]"}`}
            >
              {h}
            </Cell>
          ))}
          {emptyLetters.map((x) => <Empty key={x} n={1} letter={x} />)}
          {rows.map((r, i) => <DataRow key={i} n={i + 2} r={r} />)}
        </div>
      </div>
      <div className="flex-1 bg-[#4f5050] flex justify-center pt-[2px]">
        <div className="w-[21px] h-[678px] rounded-full bg-[#3f3f3f] flex flex-col items-center pt-[3px]">
          <svg width="11" height="10" viewBox="0 0 11 10"><path d="M5.500 0L11 10H0z" fill="#e2e2e2" /></svg>
          <div className="w-[11px] h-[141px] mt-[6px] rounded-full bg-[#e0e0e0]" />
          <svg width="11" height="10" viewBox="0 0 11 10" className="mt-auto mb-[5px]"><path d="M5.500 10L11 0H0z" fill="#e2e2e2" /></svg>
        </div>
      </div>
    </div>
  );
}

function SheetTabs() {
  return (
    <div className="h-[40px] shrink-0 bg-gradient-to-r from-[#4c5554] to-[#50505e] flex items-start text-[17px] text-[#f2f2f2] border-b border-[#3d3d3d]">
      <ChevronLeft size={20} strokeWidth={1.2} className="ml-[26px] mt-[11px] text-[#aaa]" />
      <ChevronRight size={20} strokeWidth={1.2} className="ml-[20px] mt-[11px] text-[#aaa]" />
      <span className="ml-[65px] mt-[9px] w-[68px] leading-[24px]">Sheet1</span>
      <div className="w-px h-[24px] mt-[9px] bg-[#8a8a8a]" />
      <div className="ml-[4px] w-[74px] h-[35px] bg-white rounded-b-[6px] flex flex-col items-center text-black">
        <span className="leading-[24px] mt-[5px]">Sheet2</span>
        <div className="w-[54px] h-[2px] bg-[#107c41]" />
      </div>
      <div className="ml-[5px] w-px h-[24px] mt-[9px] bg-[#8a8a8a]" />
      <span className="ml-[16px] mt-[9px] w-[68px] leading-[24px]">Sheet3</span>
      <div className="w-px h-[24px] mt-[9px] bg-[#8a8a8a]" />
      <Plus size={18} strokeWidth={1.3} className="ml-[50px] mt-[12px] text-[#eee]" />
      <EllipsisVertical size={18} className="ml-[689px] mt-[12px] text-[#eee]" />
      <div className="ml-[12px] mt-[9px] w-[721px] h-[21px] rounded-full bg-[#3f3f3f] flex items-center px-[6px]">
        <svg width="7" height="12" viewBox="0 0 7 12"><path d="M0 6l7-6v12z" fill="#ddd" /></svg>
        <div className="w-[652px] h-[11px] ml-[8px] rounded-full bg-[#c4c4c4]" />
        <svg width="7" height="12" viewBox="0 0 7 12" className="ml-auto"><path d="M7 6L0 0v12z" fill="#ddd" /></svg>
      </div>
    </div>
  );
}

function StatusBar() {
  return (
    <div className="h-[27px] shrink-0 pt-[1px] bg-[#525252] flex items-center text-[#eee] text-[13px]">
      <span className="ml-[14px]">Ready</span>
      <svg width="18" height="19" viewBox="0 0 18 19" className="ml-[25px]">
        <rect x="1" y="1" width="14" height="16" fill="none" stroke="#eee" />
        <path d="M3 4h10M3 7h5M3 10h4M3 13h4" stroke="#eee" />
        <circle cx="12" cy="12" r="4.500" fill="#525252" stroke="#eee" />
        <circle cx="12" cy="12" r="1.500" fill="#eee" />
      </svg>
      <svg width="19" height="20" viewBox="0 0 19 20" className="ml-[22px]">
        <circle cx="8" cy="3" r="2" fill="none" stroke="#eee" />
        <path d="M1 6l7 1 7-1M8 7v5l-4 7M8 12l5 7M12 14l5 5M17 14l-5 5" fill="none" stroke="#eee" />
      </svg>
      <span className="ml-[4px] font-bold text-[12.2px]">Accessibility: Investigate</span>
      <div className="ml-auto w-[50px] h-[27px] -mt-[1px] bg-[#626262] flex items-center justify-center">
        <svg width="17" height="17" viewBox="0 0 17 17">
          <path d="M1 1h15v15H1zM6 1v15M11 1v15M1 6h15M1 11h15" fill="none" stroke="#fff" strokeWidth="1.4" />
        </svg>
      </div>
      <svg width="19" height="19" viewBox="0 0 19 19" className="ml-[16px]">
        <rect x="1" y="1" width="17" height="17" fill="none" stroke="#eee" strokeWidth="1.4" />
        <rect x="6" y="4" width="7" height="11" fill="none" stroke="#eee" />
        <path d="M8 7h3M8 10h3M8 13h3" stroke="#eee" />
      </svg>
      <svg width="19" height="19" viewBox="0 0 19 19" className="ml-[32px]">
        <path d="M1 1h17v17H1zM1 13h9V1" fill="none" stroke="#eee" strokeWidth="1.4" />
      </svg>
      <Minus size={11} className="ml-[22px]" />
      <div className="ml-[4px] w-[125px] h-px bg-[#ddd] flex items-center">
        <div className="ml-[62px] w-[6px] h-[14px] bg-[#c4c4c4]" />
      </div>
      <Plus size={13} className="ml-[5px]" />
      <span className="ml-[14px] w-[31px] mr-[12px] text-[12.5px]">100%</span>
    </div>
  );
}

function AppDot({ bar }) {
  return bar ? (
    <div className="absolute left-1/2 -translate-x-1/2 bottom-[2px] w-[20px] h-[4px] rounded-full bg-[#e3a6e8]" />
  ) : (
    <div className="absolute left-1/2 -translate-x-1/2 top-[50px] w-[5px] h-[5px] rounded-full bg-[#8d8d93]" />
  );
}

function Taskbar() {
  return (
    <div className="h-[60px] shrink-0 bg-gradient-to-r from-[#1b2523] via-[#1d2a3e] via-50% to-[#2f1650] flex items-center text-[#e8e8e8] relative [font-family:'Open_Sans',sans-serif]">
      <div className="w-[475px] flex items-center pl-[26px] shrink-0">
        <div className="relative w-[26px] h-[40px]">
          <svg width="26" height="18" viewBox="0 0 26 18" className="mt-[20px]">
            <path d="M0 11L9 2l5 7 8-9 4 6-3 12H12l-3-6-4 5z" fill="#3f8f24" />
            <path d="M12 15L14 9l8-9 2 4-4 11z" fill="#7ec735" />
          </svg>
          <div className="absolute left-[13px] top-[0px] w-[19px] h-[20px] rounded-full bg-[#f5949b] text-[#222] text-[13px] flex items-center justify-center">4</div>
        </div>
        <div className="ml-[13px] text-[14.8px] leading-[20px]">
          <div>JKTYRE</div>
          <div className="text-[#5fc25f]">+5.97%</div>
        </div>
      </div>
      <svg width="28" height="29" viewBox="0 0 28 29" className="shrink-0">
        <defs>
          <linearGradient id="win" x1="0" y1="0" x2="1" y2="1">
            <stop offset="0" stopColor="#7fdcff" />
            <stop offset="1" stopColor="#0f9cf5" />
          </linearGradient>
        </defs>
        <path d="M0 1a1 1 0 011-1h12v14H0zM15 0h12a1 1 0 011 1v13H15zM0 15h13v14H1a1 1 0 01-1-1zM15 15h13v13a1 1 0 01-1 1H15z" fill="url(#win)" />
      </svg>
      <div className="ml-[18px] w-[275px] h-[39px] rounded-full bg-[#3a4a50] border border-[#55646a] flex items-center shrink-0">
        <Search size={20} strokeWidth={1.6} className="ml-[13px] text-[#e6e6e6]" />
        <span className="ml-[13px] text-[16px] text-[#d6dadb]">Search</span>
        <svg width="56" height="32" viewBox="0 0 56 32" className="ml-auto mr-[9px]">
          <ellipse cx="13" cy="16" rx="13" ry="4.500" fill="#8f8cb4" transform="rotate(-12 13 16)" />
          <path d="M6 14c0-10 14-10 15-3z" fill="#aeabcf" />
          <path d="M25 30l8-22c2-6 8-6 8 0" fill="none" stroke="#d79a55" strokeWidth="2" />
          <path d="M44 7c4-3 10-2 11 1s-8 4-11 1M48 10l-6 14 5 6 4-18" fill="#8f8cb4" stroke="#aeabcf" />
        </svg>
      </div>
      <svg width="30" height="30" viewBox="0 0 30 30" className="ml-[15px] shrink-0">
        <rect x="0" y="8" width="22" height="22" rx="2" fill="#5f5f5f" />
        <rect x="8" y="0" width="22" height="20" rx="2" fill="#f4f4f4" />
        <rect x="8" y="8" width="14" height="12" fill="#a8a8a8" />
      </svg>
      <svg width="30" height="28" viewBox="0 0 30 28" className="ml-[24px] shrink-0">
        <circle cx="16" cy="5" r="4.500" fill="#7b83eb" />
        <circle cx="25" cy="7" r="3" fill="#5059c9" />
        <path d="M20 11h9v8a5 5 0 01-9 3z" fill="#5059c9" />
        <path d="M8 11h15v11a6 6 0 01-15 0z" fill="#7b83eb" />
        <rect x="0" y="7" width="14" height="14" rx="2" fill="#4b53bc" />
        <text x="7" y="18" textAnchor="middle" fontSize="11" fontWeight="700" fill="#fff" fontFamily="Noto Sans, sans-serif">T</text>
      </svg>
      <svg width="28" height="30" viewBox="0 0 28 30" className="ml-[27px] shrink-0">
        <defs>
          <linearGradient id="cop" x1="0" y1="0" x2="1" y2="1">
            <stop offset="0" stopColor="#35c1f1" />
            <stop offset=".5" stopColor="#8a6cf0" />
            <stop offset="1" stopColor="#ef5da8" />
          </linearGradient>
          <linearGradient id="cop2" x1="0" y1="1" x2="1" y2="0">
            <stop offset="0" stopColor="#f9c32f" />
            <stop offset="1" stopColor="#e8568f" />
          </linearGradient>
        </defs>
        <path d="M10 0h9c4 0 6 5 5 9l-5 16c-1 3-3 5-7 5H5C2 30 0 27 1 24z" fill="url(#cop)" />
        <path d="M1 24L6 8c1-4 4-7 8-5l-6 20c-1 4-3 7-7 1z" fill="url(#cop2)" />
        <path d="M13 10h9l-5 14H8z" fill="#e8ecff" />
      </svg>
      <div className="relative ml-[24px] shrink-0 w-[32px] h-[60px] flex items-center">
        <svg width="32" height="30" viewBox="0 0 32 30">
          <path d="M0 2a2 2 0 012-2h9l3 3h16a2 2 0 012 2v23a2 2 0 01-2 2H2a2 2 0 01-2-2z" fill="#f4c23e" />
          <path d="M0 8h32v20a2 2 0 01-2 2H2a2 2 0 01-2-2z" fill="#fcd86a" />
          <rect x="9" y="19" width="14" height="9" rx="2" fill="#1490df" />
        </svg>
        <AppDot />
      </div>
      <svg width="32" height="32" viewBox="0 0 32 32" className="ml-[24px] shrink-0">
        <defs>
          <linearGradient id="edge" x1="0" y1="0" x2="1" y2="1">
            <stop offset="0" stopColor="#35c8a3" />
            <stop offset="1" stopColor="#0c59a4" />
          </linearGradient>
        </defs>
        <circle cx="16" cy="16" r="16" fill="url(#edge)" />
        <path d="M32 17c0-5-5-8-10-7-5 1-7 6-4 10s10 4 14-3z" fill="#1b2a4a" />
        <path d="M24 28c-6 2-14-2-14-10 0-5 4-8 8-8-6 0-13 4-13 12 3 9 13 10 19 6z" fill="#0c59a4" />
      </svg>
      <svg width="29" height="32" viewBox="0 0 29 32" className="ml-[24px] shrink-0">
        <path d="M8 7V4c0-5 13-5 13 0v3" fill="none" stroke="#2aa7df" strokeWidth="2" />
        <rect x="0" y="6" width="29" height="26" rx="4" fill="#f3f3f3" />
        <rect x="9" y="13" width="5" height="5" fill="#f25022" />
        <rect x="15" y="13" width="5" height="5" fill="#7fba00" />
        <rect x="9" y="19" width="5" height="5" fill="#00a4ef" />
        <rect x="15" y="19" width="5" height="5" fill="#ffb900" />
      </svg>
      <svg width="30" height="37" viewBox="0 0 30 37" className="ml-[26px] shrink-0">
        <defs>
          <linearGradient id="mapp" x1="0" y1="1" x2="1" y2="0">
            <stop offset="0" stopColor="#5a2ee0" />
            <stop offset="1" stopColor="#1e7bf0" />
          </linearGradient>
        </defs>
        <rect width="30" height="37" fill="url(#mapp)" />
        <path d="M4 29L15 9l-2 20M14 29L25 9l-3 20" fill="none" stroke="#fff" strokeWidth="2.500" />
      </svg>
      <svg width="29" height="36" viewBox="0 0 29 36" className="ml-[26px] shrink-0">
        <path d="M0 4l7-4 7.500 6L22 0l7 4v20l-14.500 12L0 24z" fill="#a3262a" />
        <path d="M7 7l7.500 6L22 7v14l-7.500 6L7 21z" fill="#1f1a3a" />
      </svg>
      <div className="relative ml-[24px] shrink-0 w-[36px] h-[60px] flex items-center">
        <svg width="36" height="46" viewBox="0 0 36 46">
          <circle cx="16" cy="27" r="16" fill="#ea4335" />
          <path d="M16 27L30 19a16 16 0 01-8 23z" fill="#fbc02d" />
          <path d="M16 27l6 15A16 16 0 012 35z" fill="#34a853" />
          <circle cx="16" cy="27" r="7" fill="#fff" />
          <circle cx="16" cy="27" r="5.500" fill="#4285f4" />
          <ellipse cx="26" cy="12" rx="10" ry="12" fill="#6f8a4c" />
          <circle cx="25" cy="10" r="5" fill="#a9b98c" />
        </svg>
        <AppDot />
      </div>
      <div className="relative ml-[24px] shrink-0 w-[22px] h-[60px] flex items-center">
        <svg width="22" height="33" viewBox="0 0 22 33">
          <rect y="1" width="22" height="30" rx="1" fill="#4ba3d9" />
          <path d="M1 0v3M5 0v3M9 0v3M13 0v3M17 0v3M21 0v3" stroke="#9fd2ee" />
          <path d="M4 9h14M4 14h14M4 19h14" stroke="#0d3e66" strokeWidth="2" />
          <rect y="28" width="22" height="5" fill="#8a5a2b" />
        </svg>
        <AppDot />
      </div>
      <div className="relative ml-[28px] shrink-0 w-[31px] h-[60px] flex items-center">
        <svg width="31" height="30" viewBox="0 0 31 30">
          <rect width="31" height="30" rx="3" fill="#3a3a3a" />
          <rect width="31" height="7" rx="2" fill="#6a6a6a" />
          <path d="M6 12l6 5-6 5" fill="none" stroke="#eee" strokeWidth="1.600" />
          <path d="M14 24h9" stroke="#eee" strokeWidth="1.600" />
        </svg>
        <AppDot />
      </div>
      <div className="relative ml-[16px] shrink-0 w-[48px] h-[54px] rounded-[5px] bg-[#3d2a5a] border border-[#4a3a66] flex items-center justify-center">
        <ExcelIcon size={30} />
        <AppDot bar />
      </div>
      <ChevronUp size={20} strokeWidth={1.6} className="ml-[223px] shrink-0" />
      <Wifi size={22} strokeWidth={1.6} className="ml-[19px] shrink-0" />
      <VolumeX size={20} strokeWidth={1.4} className="ml-[9px] shrink-0" />
      <svg width="20" height="14" viewBox="0 0 20 14" className="ml-[10px] shrink-0">
        <rect x=".7" y=".7" width="16.600" height="12.600" rx="2" fill="none" stroke="#eee" strokeWidth="1.3" />
        <rect x="3" y="3" width="6" height="8" fill="#eee" />
        <rect x="18" y="4" width="2" height="6" fill="#eee" />
      </svg>
      <div className="ml-auto pr-[24px] text-right text-[14.8px] leading-[20px] text-[#eee]">
        <div>09:06</div>
        <div>16-04-2025</div>
      </div>
    </div>
  );
}

export default function App() {
  return (
    <div className="w-[1920px] h-[1080px] overflow-hidden flex flex-col bg-[#4e4f4f] [font-family:'Open_Sans',sans-serif]">
      <TitleBar />
      <MenuBar />
      <Ribbon />
      <FormulaBar />
      <Sheet />
      <SheetTabs />
      <StatusBar />
      <Taskbar />
    </div>
  );
}
